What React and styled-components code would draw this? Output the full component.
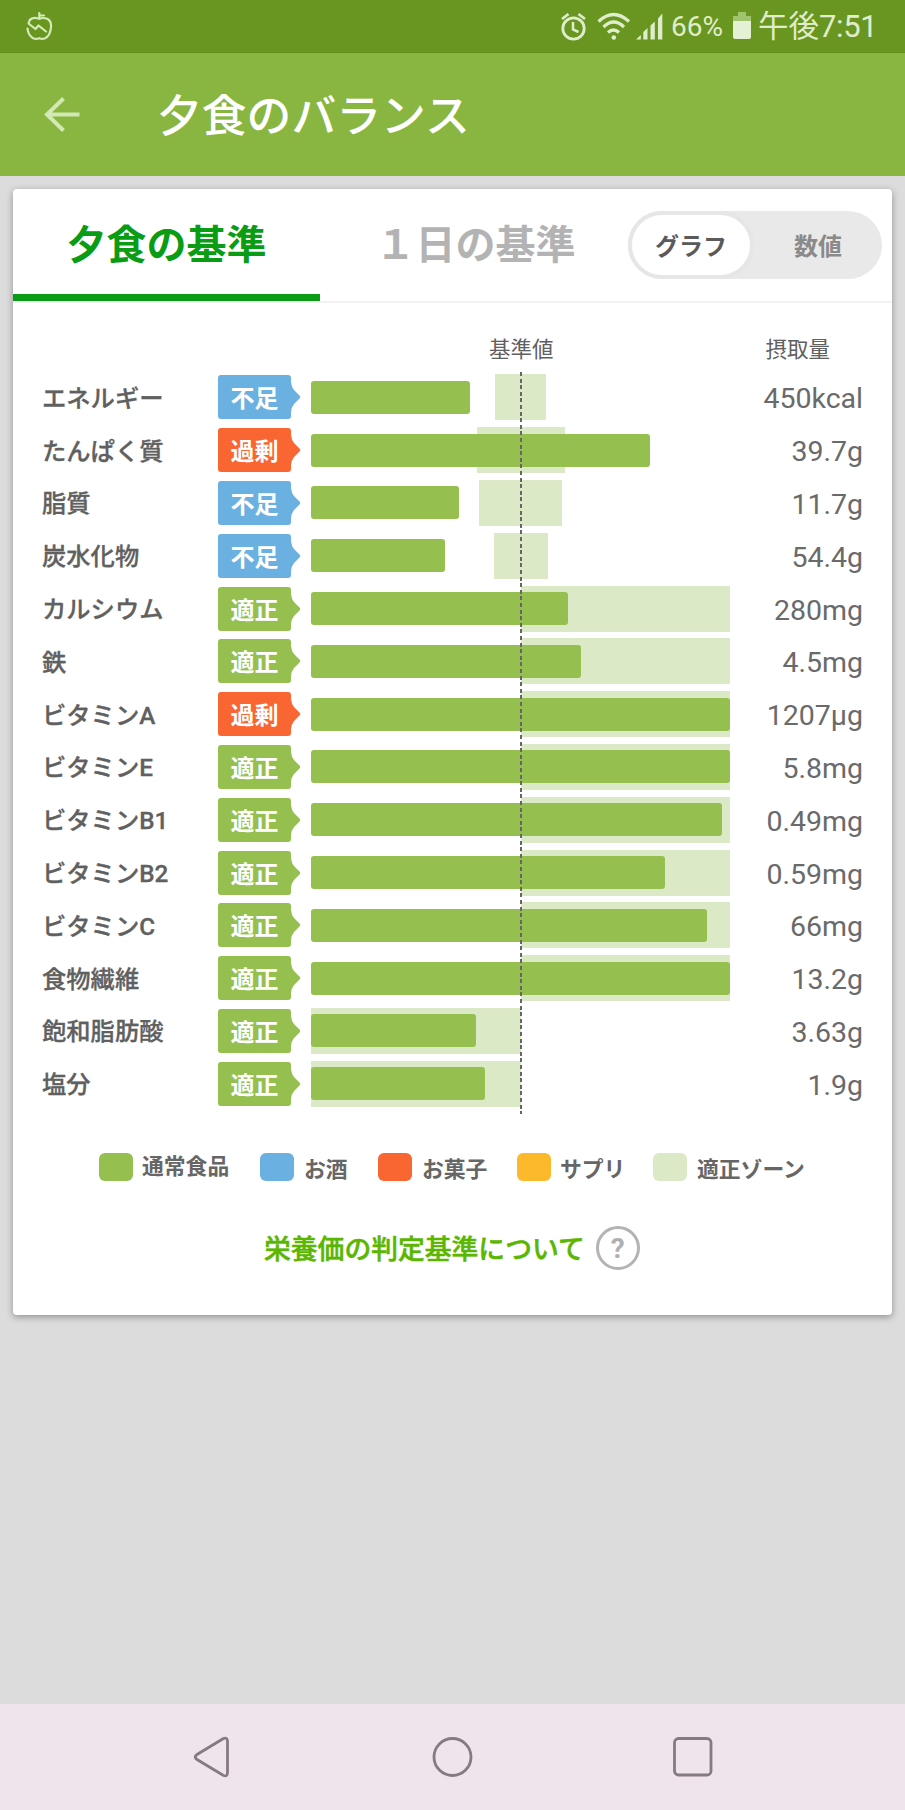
import React from 'react';
import styled, { createGlobalStyle } from 'styled-components';

const BAR_MAX = 419;

const colors = {
  normal: '#95bf4f',
  alcohol: '#6ab0e0',
  sweets: '#f96632',
  supplement: '#fdb92c',
  zone: '#dce9c7',
};

const badges = {
  low: { text: '不足', color: colors.alcohol },
  over: { text: '過剰', color: colors.sweets },
  good: { text: '適正', color: colors.normal },
};

const nutrients = [
  { name: 'エネルギー', state: 'low', bar: 159, zone: [184, 234.5], value: '450kcal' },
  { name: 'たんぱく質', state: 'over', bar: 339, zone: [166, 253.5], value: '39.7g' },
  { name: '脂質', state: 'low', bar: 148, zone: [167.5, 251], value: '11.7g' },
  { name: '炭水化物', state: 'low', bar: 134, zone: [182.5, 236.5], value: '54.4g' },
  { name: 'カルシウム', state: 'good', bar: 257, zone: [210, 419], value: '280mg' },
  { name: '鉄', state: 'good', bar: 270, zone: [210, 419], value: '4.5mg' },
  { name: 'ビタミンA', state: 'over', bar: 419, zone: [210, 419], value: '1207μg' },
  { name: 'ビタミンE', state: 'good', bar: 419, zone: [210, 419], value: '5.8mg' },
  { name: 'ビタミンB1', state: 'good', bar: 410.5, zone: [210, 419], value: '0.49mg' },
  { name: 'ビタミンB2', state: 'good', bar: 353.5, zone: [210, 419], value: '0.59mg' },
  { name: 'ビタミンC', state: 'good', bar: 395.5, zone: [210, 419], value: '66mg' },
  { name: '食物繊維', state: 'good', bar: 419, zone: [210, 419], value: '13.2g' },
  { name: '飽和脂肪酸', state: 'good', bar: 165, zone: [0, 210], value: '3.63g' },
  { name: '塩分', state: 'good', bar: 173.5, zone: [0, 210], value: '1.9g' },
];

const legend = [
  { text: '通常食品', color: colors.normal, width: 161, gap: 9, raised: true },
  { text: 'お酒', color: colors.alcohol, width: 118, gap: 10 },
  { text: 'お菓子', color: colors.sweets, width: 139, gap: 10 },
  { text: 'サプリ', color: colors.supplement, width: 136, gap: 9 },
  { text: '適正ゾーン', color: colors.zone, width: 153, gap: 10 },
];

function StatusIcons() {
  return (
    <svg width='105' height='32' viewBox='560 10 105 32' fill='none' stroke='#e0edcc'>
      <circle cx='573.5' cy='28.5' r='10.7' strokeWidth='2.8' />
      <path d='M573 22v7.5l5.5 2.5' strokeWidth='2.5' />
      <path d='M562 19l6.500-5M585 19l-6.500-5' strokeWidth='2.8' />
      <path d='M598.500 21.500Q613.500 7.500 629 21.500M603.500 27Q613.500 17 624 27M608 32.500Q613.500 27.500 619 32.500' strokeWidth='3.2' />
      <circle cx='613.800' cy='37.500' r='2.300' fill='#e0edcc' stroke='none' />
      <path
        d='M636 39.500l4.800-4.500v4.500zM643.300 39.500v-7.500l4.200-4v11.500zM650.500 39.500V25.500l4.300-4v18zM658 39.500V18.500l4.300-5v26z'
        fill='#e0edcc'
        stroke='none'
      />
    </svg>
  );
}

function App() {
  return (
    <Screen>
      <GlobalStyle />
      <StatusBar>
        <svg width='30' height='32' viewBox='25 10 30 32' fill='none' stroke='#d6ebb8' strokeWidth='2.2' strokeLinecap='round' strokeLinejoin='round'>
          <path d='M39.300 18.500V13M40.500 15.500h3.500' />
          <path d='M46 31.500l-7.500-6-3 3.500-7-5.500q1-6 7.500-5.500l3.300.8 3.300-.8q8.500-.3 8.500 8-.5 10-6.500 12.500-2.500.8-5.300-.3-3 1-5.500.3-5.500-2.500-6.300-10' />
        </svg>
        <StatusRight>
          <StatusIcons />
          <Percent>66%</Percent>
          <svg width='19' height='28' viewBox='0 0 19 28'>
            <path d='M0 10V4h5V0h8v4h5v6z' fill='#9fc36f' />
            <path d='M0 9h18v16q0 2-2 2H2q-2 0-2-2z' fill='#e5f1d5' />
          </svg>
          <Clock>
            午後<span>7:51</span>
          </Clock>
        </StatusRight>
      </StatusBar>
      <Header>
        <svg width='38' height='38' viewBox='0 0 38 38' fill='none' stroke='#d3e8b4' strokeWidth='4'>
          <path d='M36.500 18.500H4M20.500 2.500L4 18.500 20.500 34.500' />
        </svg>
        <Title>夕食のバランス</Title>
      </Header>
      <Main>
        <Card>
          <Tabs>
            <Tab $active>夕食の基準</Tab>
            <Tab>１日の基準</Tab>
            <Toggle>
              <ToggleItem $active>グラフ</ToggleItem>
              <ToggleItem>数値</ToggleItem>
            </Toggle>
          </Tabs>
          <Columns>
            <ColumnName>基準値</ColumnName>
            <ColumnName>摂取量</ColumnName>
          </Columns>
          <Chart>
            {nutrients.map((n) => (
              <Row key={n.name}>
                <Name>{n.name}</Name>
                <Badge $color={badges[n.state].color}>
                  {badges[n.state].text}
                  <BadgeTip viewBox='0 0 10 30'>
                    <path d='M0 0Q.5 5 3 8L8 13Q10.500 15 8 17L3 22Q.5 25 0 30z' />
                  </BadgeTip>
                </Badge>
                <Track>
                  <Zone style={{ left: n.zone[0], width: n.zone[1] - n.zone[0] }} />
                  <Bar style={{ width: n.bar }} />
                </Track>
                <Value>{n.value}</Value>
              </Row>
            ))}
            <BaseLine />
          </Chart>
          <Legend>
            {legend.map((item) => (
              <LegendItem key={item.text} $width={item.width} $gap={item.gap}>
                <Swatch $color={item.color} />
                <LegendText $raised={item.raised}>{item.text}</LegendText>
              </LegendItem>
            ))}
          </Legend>
          <About>
            <AboutText>栄養価の判定基準について</AboutText>
            <Question>?</Question>
          </About>
        </Card>
      </Main>
      <NavBar>
        <svg width='42' height='46' viewBox='0 0 42 46'>
          <path d='M32.500 4.500L6 20.500Q2.500 23 6 25.500l26.500 16Q36.500 43 36.500 38.500V7.500Q36.500 3 32.500 4.500z' />
        </svg>
        <svg width='42' height='46' viewBox='0 0 42 46'>
          <circle cx='20.500' cy='23' r='18.500' />
        </svg>
        <svg width='42' height='46' viewBox='0 0 42 46'>
          <rect x='2.500' y='4.500' width='36.500' height='36.500' rx='4' />
        </svg>
      </NavBar>
    </Screen>
  );
}

export default App;

const GlobalStyle = createGlobalStyle`
  * {
    box-sizing: border-box;
  }
  body {
    margin: 0;
    background: #dcdcdc;
    font-family: Roboto, 'Noto Sans CJK JP', sans-serif;
  }
`;

const Screen = styled.div`
  width: 905px;
  height: 1810px;
  display: flex;
  flex-direction: column;
  overflow: hidden;
  white-space: nowrap;
`;

const StatusBar = styled.div`
  height: 53px;
  padding: 0 28px 0 25px;
  display: flex;
  align-items: center;
  justify-content: space-between;
  background: #689620;
  border-bottom: 1px solid #60901b;
`;

const StatusRight = styled.div`
  display: flex;
  align-items: center;
  color: #e0edcc;
`;

const Percent = styled.span`
  width: 68px;
  padding: 2px 0 0 6px;
  font-size: 28px;
  line-height: 40px;
`;

const Clock = styled.span`
  width: 125px;
  padding: 2px 0 0 6px;
  font-size: 30.5px;
  line-height: 40px;
  span {
    font-size: 31px;
    letter-spacing: -0.4px;
  }
`;

const Header = styled.header`
  height: 123px;
  padding: 0 43px;
  display: flex;
  align-items: center;
  background: #88b640;
`;

const Title = styled.h1`
  margin: -4px 0 0 76px;
  color: white;
  font-size: 44.8px;
  font-weight: 500;
`;

const Main = styled.main`
  flex: 1;
  padding: 13px;
`;

const Card = styled.section`
  width: 879px;
  height: 1126px;
  background: white;
  border-radius: 4px;
  box-shadow: 0 2px 7px rgba(0, 0, 0, 0.35);
`;

const Tabs = styled.div`
  height: 114px;
  display: flex;
  border-bottom: 2px solid #f2f2f2;
`;

const Tab = styled.div`
  width: 307px;
  padding: ${(props) => (props.$active ? 0 : '0 0 7px 4px')};
  display: flex;
  align-items: center;
  justify-content: center;
  border-bottom: ${(props) => (props.$active ? '7px solid #0a9c14' : 'none')};
  color: ${(props) => (props.$active ? '#0a9c14' : '#b3b3b3')};
  font-size: 40px;
  font-weight: 700;
`;

const Toggle = styled.div`
  width: 254px;
  height: 68px;
  margin: 22px 0 0 1px;
  display: flex;
  border-radius: 34px;
  background: #e9e9e9;
`;

const ToggleItem = styled.div`
  flex: ${(props) => (props.$active ? '0 0 126px' : '1')};
  padding-bottom: 2px;
  display: flex;
  align-items: center;
  justify-content: center;
  border: 4px solid #e6e6e6;
  border-width: ${(props) => (props.$active ? '4px' : 0)};
  border-radius: 34px;
  background: ${(props) => (props.$active ? 'white' : 'transparent')};
  color: ${(props) => (props.$active ? '#5a5a5a' : '#8a8a8a')};
  font-size: 24px;
  font-weight: 700;
`;

const Columns = styled.div`
  height: 68px;
  padding: 31px 62px 0 476px;
  display: flex;
  justify-content: space-between;
`;

const ColumnName = styled.span`
  color: #606060;
  font-size: 21.5px;
  line-height: 32px;
`;

const Chart = styled.div`
  position: relative;
`;

const Row = styled.div`
  height: 52.8px;
  padding: 0 29px;
  display: flex;
  align-items: center;
`;

const Name = styled.div`
  width: 176px;
  padding-bottom: 2px;
  color: #606060;
  font-size: 24.3px;
  font-weight: 500;
  -webkit-text-stroke: 0.3px #606060;
`;

const Badge = styled.div`
  position: relative;
  width: 73px;
  height: 44px;
  padding-bottom: 1px;
  display: flex;
  align-items: center;
  justify-content: center;
  border-radius: 3px;
  background: ${(props) => props.$color};
  color: white;
  fill: ${(props) => props.$color};
  font-size: 24px;
  font-weight: 700;
`;

const BadgeTip = styled.svg`
  position: absolute;
  left: 72.5px;
  top: 7px;
  width: 10px;
  height: 30px;
`;

const Track = styled.div`
  position: relative;
  width: ${BAR_MAX}px;
  height: 46px;
  margin-left: 20px;
  display: flex;
  align-items: center;
`;

const Zone = styled.div`
  position: absolute;
  top: 0;
  height: 46px;
  background: ${colors.zone};
`;

const Bar = styled.div`
  position: relative;
  height: 33px;
  border-radius: 3px;
  background: ${colors.normal};
`;

const Value = styled.div`
  flex: 1;
  padding-top: 3px;
  text-align: right;
  color: #6a6a6a;
  font-size: 28.5px;
`;

/* vertical dashed line for the reference intake */
const BaseLine = styled.div`
  position: absolute;
  left: 507px;
  top: 1px;
  width: 2px;
  height: 742px;
  background: repeating-linear-gradient(#666 0 4px, transparent 4px 6.6px);
`;

const Legend = styled.div`
  height: 28px;
  margin: 43px 0 0 86px;
  display: flex;
`;

const LegendItem = styled.div`
  width: ${(props) => props.$width}px;
  display: flex;
  gap: ${(props) => props.$gap}px;
`;

const Swatch = styled.span`
  width: 34px;
  height: 28px;
  border-radius: 6px;
  background: ${(props) => props.$color};
`;

const LegendText = styled.span`
  margin-top: ${(props) => (props.$raised ? '-1px' : '2px')};
  color: #666;
  font-size: 21.8px;
  font-weight: 700;
  line-height: 30px;
`;

const About = styled.div`
  margin: 45px 0 0 251px;
  display: flex;
  align-items: center;
  gap: 11px;
`;

const AboutText = styled.span`
  padding-bottom: 2px;
  color: #5ab600;
  font-size: 26.8px;
  font-weight: 500;
  -webkit-text-stroke: 0.5px #5ab600;
`;

const Question = styled.span`
  width: 44px;
  height: 44px;
  display: flex;
  align-items: center;
  justify-content: center;
  border: 3px solid #b3b3b3;
  border-radius: 50%;
  color: #b0b0b0;
  font-size: 28px;
  font-weight: 700;
`;

const NavBar = styled.nav`
  height: 106px;
  padding: 0 191px;
  display: flex;
  align-items: center;
  justify-content: space-between;
  background: #efe3ec;
  svg {
    fill: none;
    stroke: #857984;
    stroke-width: 2.8;
  }
`;
